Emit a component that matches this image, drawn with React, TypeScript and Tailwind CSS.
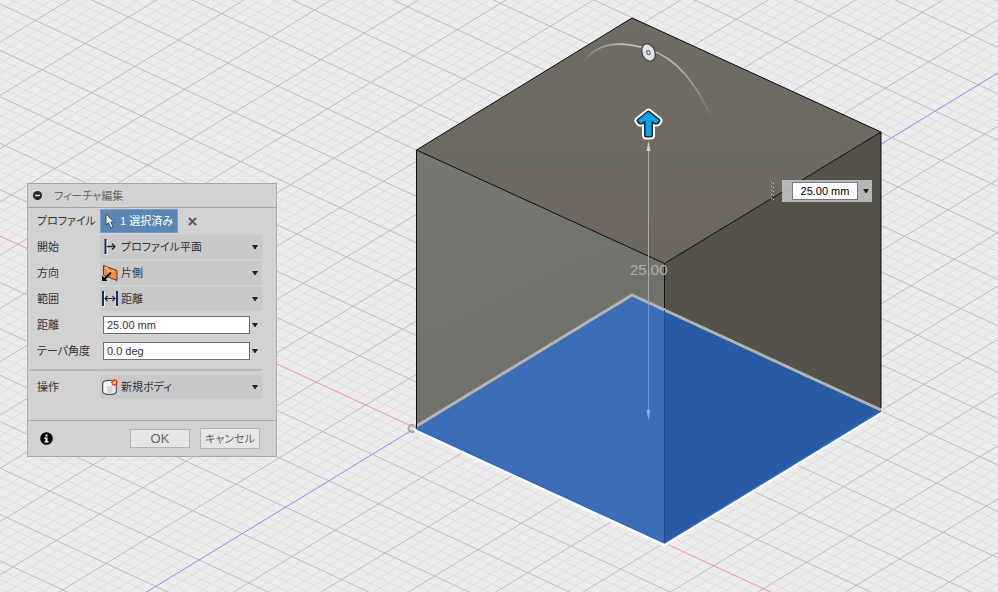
import { useState, type ReactNode } from "react";

// grid basis in px: one major cell along the red axis and one along the blue axis
const ORIGIN = { x: 415.5, y: 428 };
const RED = { x: 49.7, y: 22.96 };
const BLUE = { x: 43.3, y: -26.4 };
const REACH = 30;

const gridPath = (major: boolean) => {
  const parts: string[] = [];
  for (let i = -REACH * 5; i <= REACH * 5; i++) {
    if ((i % 5 === 0) !== major || i === 0) continue;
    const k = i / 5;
    [
      [RED, BLUE],
      [BLUE, RED],
    ].forEach(([step, dir]) => {
      const x = ORIGIN.x + step.x * k;
      const y = ORIGIN.y + step.y * k;
      parts.push(
        `M${x - dir.x * REACH} ${y - dir.y * REACH}L${x + dir.x * REACH} ${y + dir.y * REACH}`
      );
    });
  }
  return parts.join("");
};

const axisPath = (dir: { x: number; y: number }) =>
  `M${ORIGIN.x - dir.x * REACH} ${ORIGIN.y - dir.y * REACH}L${ORIGIN.x + dir.x * REACH} ${ORIGIN.y + dir.y * REACH}`;

const ARROW = "M648.5 112.5L658.5 120.5L657 122.5H655L651 119.5V135.5H646V119.5L642 122.5H640L638.5 120.5Z";

function Viewport() {
  return (
    <svg className="absolute inset-0 h-full w-full" aria-hidden="true">
      <defs>
        <linearGradient id="leftFace" x1="0" y1="0" x2="0.3" y2="1">
          <stop offset="0" stopColor="#777872" />
          <stop offset="1" stopColor="#6d6d66" />
        </linearGradient>
        <linearGradient id="topFace" x1="0" y1="0" x2="0" y2="1">
          <stop offset="0" stopColor="#706c64" />
          <stop offset="1" stopColor="#6c665e" />
        </linearGradient>
        <linearGradient id="arc" x1="0" y1="0" x2="1" y2="0">
          <stop offset="0" stopColor="#c8c8c8" stopOpacity="0.1" />
          <stop offset="0.3" stopColor="#c0c0c0" />
          <stop offset="0.7" stopColor="#b8b8b8" />
          <stop offset="1" stopColor="#c8c8c8" stopOpacity="0.05" />
        </linearGradient>
      </defs>

      <path d={gridPath(false)} stroke="#dedede" fill="none" />
      <path d={gridPath(true)} stroke="#bdbdbd" fill="none" />
      <path d={axisPath(RED)} stroke="#ff8f8f" fill="none" />
      <path d={axisPath(BLUE)} stroke="#9090f6" fill="none" />

      {/* box */}
      <path d="M416.5 150L632 18L881 132L664.5 263.5Z" fill="url(#topFace)" />
      <path d="M416.5 150L664.5 263.5V543L416.5 428Z" fill="url(#leftFace)" />
      <path d="M664.5 263.5L881 132V411L664.5 543Z" fill="#55524a" />

      {/* selected profile */}
      <path d="M415.5 428L632 295L664.5 310.5V543.5Z" fill="#3b6db9" />
      <path d="M664.5 310.5L881 411L664.5 543.5Z" fill="#285ba5" />
      <path d="M415 427L632 295L881 410" stroke="#b6b4b0" strokeWidth="3" strokeLinejoin="round" fill="none" />
      <path d="M413 429L664.5 545L882 412" stroke="#fff" strokeWidth="3" fill="none" />
      <path d="M416 428.5L664.5 543L881 411" stroke="#2a68c6" strokeWidth="1.5" fill="none" />

      <path
        d="M416.5 428V150L632 18L881 132V408M416.5 150L664.5 263.5L881 132M664.5 263.5V308"
        stroke="#0c0c0c"
        fill="none"
      />
      <path d="M664.5 310V543" stroke="#1d4b94" fill="none" />
      <path d="M414 425.5A3.5 3.5 0 1 0 414.5 431" stroke="#a9a9a9" strokeWidth="2" fill="none" />

      {/* distance dimension */}
      <path d="M648.5 148V304" stroke="#aaa9a3" fill="none" />
      <path d="M648.5 304V412" stroke="#6c96d6" fill="none" />
      <path d="M648.5 141L650.5 151H646.5Z" fill="#d2d2d0" />
      <path d="M648.5 420L650.5 410H646.5Z" fill="#7fadf2" />
      <text x="630" y="275" fill="#b0b0ac" className="font-['Liberation_Sans',sans-serif] text-[15px]">
        25.00
      </text>

      {/* taper handle */}
      <path d="M584 61C598 43 618 40 648 49C677 58 696 84 711 116" stroke="url(#arc)" strokeWidth="1.8" fill="none" />
      <ellipse
        cx="648.5"
        cy="52.5"
        rx="6.5"
        ry="9"
        transform="rotate(-22 648.5 52.5)"
        fill="#e3e4e3"
        stroke="#4b4d50"
        strokeWidth="1.5"
      />
      <ellipse
        cx="648.5"
        cy="52.5"
        rx="1.6"
        ry="2.2"
        transform="rotate(-22 648.5 52.5)"
        fill="none"
        stroke="#555"
      />

      {/* pull arrow */}
      <g strokeLinecap="round" strokeLinejoin="round">
        <path d={ARROW} fill="#fff" stroke="#fff" strokeWidth="8" />
        <path d={ARROW} fill="#15242c" stroke="#15242c" strokeWidth="4" />
        <path d={ARROW} fill="#08a5ec" stroke="#08a5ec" strokeWidth="1" />
      </g>
    </svg>
  );
}

function Caret() {
  return (
    <svg className="pointer-events-none h-1 w-1.5 shrink-0" viewBox="0 0 6 4" aria-hidden="true">
      <path d="M0 0H6L3.5 4H2.5Z" fill="#222" />
    </svg>
  );
}

function StartIcon() {
  return (
    <svg width="16" height="16" viewBox="0 0 16 16" fill="none">
      <path d="M4.5 1V16" stroke="#fff" strokeWidth="2" />
      <path d="M3.5 0V15" stroke="#14305f" strokeWidth="2" />
      <path d="M5 7.5H12M10 4.5L13 7.5L10 10.5" stroke="#1d2b44" strokeWidth="1.3" />
    </svg>
  );
}

function OneSideIcon() {
  return (
    <svg width="16" height="16" viewBox="0 0 16 16" fill="none">
      <path d="M1.5 0.5L15 5.5V15.5L1.5 10Z" fill="#f58a3c" stroke="#6b3415" />
      <path d="M4 2L8 8L12 5" stroke="#ffbd88" strokeWidth="1.5" />
      <path d="M9 7.5L3 13.5" stroke="#000" strokeWidth="2" />
      <path d="M0 16V10.5L5.5 16Z" fill="#000" />
    </svg>
  );
}

function DistanceIcon() {
  return (
    <svg width="16" height="16" viewBox="0 0 16 16" fill="none">
      <path d="M2 1V16M14.5 1V16" stroke="#fff" strokeWidth="1.5" />
      <path d="M1 0V15M15 0V15" stroke="#14305f" strokeWidth="2" />
      <path d="M3 7.5H13M5.5 5L3 7.5L5.5 10M10.5 5L13 7.5L10.5 10" stroke="#1d2b44" strokeWidth="1.2" />
    </svg>
  );
}

function NewBodyIcon() {
  return (
    <svg width="16" height="16" viewBox="0 0 16 16" fill="none">
      <path
        d="M0.7 4C0.7 0.5 14.3 0.5 14.3 4V12.5C14.3 16.5 0.7 16.5 0.7 12.5Z"
        fill="#f4f5f7"
        stroke="#4a4f5a"
        strokeWidth="1.2"
      />
      <path d="M5 7H10V14.5H5Z" fill="#d3d6dd" />
      <path d="M10 7H13V14H10Z" fill="#e6e8ec" />
      <path d="M12.5 0V7M9 3.5H16M10 1L15 6M15 1L10 6" stroke="#e8330c" strokeWidth="1.4" />
      <circle cx="12.5" cy="3.5" r="1.6" fill="#ffe45c" />
    </svg>
  );
}

function Row({ id, label, children }: { id: string; label: string; children: ReactNode }) {
  return (
    <div className="flex h-[26px] items-center">
      <label htmlFor={id} className="w-[63px] shrink-0 whitespace-nowrap">
        {label}
      </label>
      <div className="flex min-w-0 flex-1 items-center">{children}</div>
    </div>
  );
}

function SelectField({ id, icon, value }: { id: string; icon: ReactNode; value: string }) {
  return (
    <div className="flex h-6 w-full items-center rounded-xs bg-[#c9c9c9] pr-1 pl-0.5">
      {icon}
      <select id={id} className="h-full min-w-0 flex-1 appearance-none bg-transparent pl-[3px] outline-none">
        <option>{value}</option>
      </select>
      <Caret />
    </div>
  );
}

function InputField({ id, value, onChange }: { id: string; value: string; onChange: (v: string) => void }) {
  return (
    <div className="flex w-full items-center justify-between pr-1 pl-[3px]">
      <input
        id={id}
        value={value}
        onChange={(e) => onChange(e.target.value)}
        className="h-[18px] w-[147px] border border-[#6e6e6e] bg-white px-[3px] outline-none"
      />
      <Caret />
    </div>
  );
}

function App() {
  const [distance, setDistance] = useState("25.00 mm");
  const [taper, setTaper] = useState("0.0 deg");

  return (
    <main className="relative min-h-screen overflow-hidden bg-[#ececec] font-['Liberation_Sans','Noto_Sans_CJK_JP',sans-serif] text-[11px] leading-4 text-[#333] [font-feature-settings:'palt']">
      <Viewport />

      <form
        onSubmit={(e) => e.preventDefault()}
        className="absolute top-[183px] left-[27px] w-[250px] border border-[#a6a6a6] bg-[#d2d2d2]"
      >
        <header className="flex h-6 items-center gap-3 border-b border-[#a6a6a6] px-[5px] text-[#666]">
          <button type="button" aria-label="折りたたむ">
            <svg width="9" height="9" viewBox="0 0 9 9">
              <circle cx="4.5" cy="4.5" r="4.5" fill="#262626" />
              <path d="M2 4.5H7" stroke="#ddd" strokeWidth="1.5" />
            </svg>
          </button>
          <h2>フィーチャ編集</h2>
        </header>

        <div className="pr-3.5 pl-[9px]">
          <Row id="profile" label="プロファイル">
            <button
              type="button"
              id="profile"
              className="flex h-6 w-[78px] items-center gap-[3px] border border-[#74a0c8] bg-[#5787b2] pl-[3px] whitespace-nowrap text-white"
            >
              <svg width="13" height="16" viewBox="0 0 13 16">
                <path
                  d="M2 1V12L4.5 9.8L6.8 15L9 14L6.8 9H10.5Z"
                  fill="#e8e8e8"
                  stroke="#33475b"
                  strokeWidth="0.9"
                />
              </svg>
              1 選択済み
            </button>
            <button type="button" aria-label="選択を解除" className="ml-2.5">
              <svg width="9" height="9" viewBox="0 0 9 9">
                <path d="M1 1L8 8M8 1L1 8" stroke="#5c5c5c" strokeWidth="2" />
              </svg>
            </button>
          </Row>
          <Row id="start" label="開始">
            <SelectField id="start" icon={<StartIcon />} value="プロファイル平面" />
          </Row>
          <Row id="direction" label="方向">
            <SelectField id="direction" icon={<OneSideIcon />} value="片側" />
          </Row>
          <Row id="extent" label="範囲">
            <SelectField id="extent" icon={<DistanceIcon />} value="距離" />
          </Row>
          <Row id="distance" label="距離">
            <InputField id="distance" value={distance} onChange={setDistance} />
          </Row>
          <Row id="taper" label="テーパ角度">
            <InputField id="taper" value={taper} onChange={setTaper} />
          </Row>
        </div>

        <hr className="mt-[5px] mr-3.5 ml-px border-t-2 border-[#bababa]" />

        <div className="mt-[3px] pr-3.5 pb-5 pl-[9px]">
          <Row id="operation" label="操作">
            <SelectField id="operation" icon={<NewBodyIcon />} value="新規ボディ" />
          </Row>
        </div>

        <footer className="flex h-9 items-center border-t border-[#a6a6a6] pr-4 pl-3">
          <button type="button" aria-label="情報">
            <svg width="13" height="13" viewBox="0 0 13 13">
              <circle cx="6.5" cy="6.5" r="6.3" fill="#000" />
              <path d="M5.5 2.5H7.5V4.5H5.5ZM4.5 5.5H7.5V9H8.5V10.5H4.5V9H5.5V7H4.5Z" fill="#fff" />
            </svg>
          </button>
          <div className="ml-auto flex items-center gap-2.5 text-[#666]">
            <button type="submit" className="h-[19px] w-[60px] border border-[#b4b4b4] bg-[#e6e6e6] text-[13px]">
              OK
            </button>
            <button
              type="button"
              className="h-[21px] w-[60px] border border-[#b4b4b4] bg-[#e6e6e6] whitespace-nowrap"
            >
              キャンセル
            </button>
          </div>
        </footer>
      </form>

      {/* in-canvas value box */}
      <div className="absolute top-[180px] left-[771px] flex items-center gap-2">
        <svg width="3" height="20" viewBox="0 0 3 20" aria-hidden="true">
          <path d="M0.5 1V20M2.5 2V20" stroke="#c4c4c0" strokeDasharray="1 3" />
        </svg>
        <div className="flex h-[22px] w-[90px] items-center justify-between bg-[#c2c2c2]/90 pr-[3px] pl-2.5">
          <input
            aria-label="距離"
            value={distance}
            onChange={(e) => setDistance(e.target.value)}
            className="h-[18px] w-[66px] border border-[#777] bg-white text-center text-black outline-none"
          />
          <Caret />
        </div>
      </div>
    </main>
  );
}

export default App;
